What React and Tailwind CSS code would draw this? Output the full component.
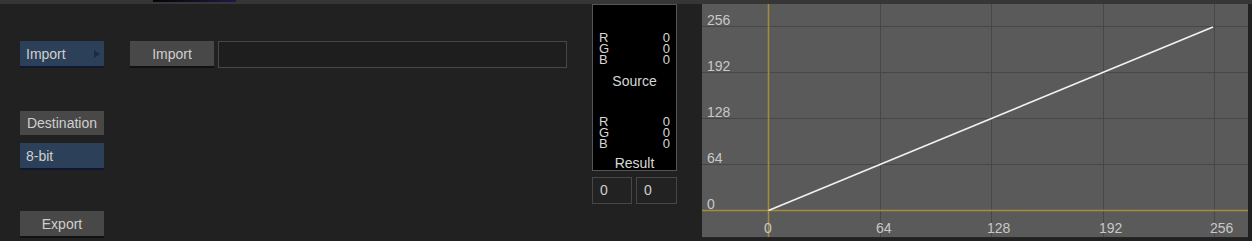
import React from 'react';

const font = { fontFamily: '"Liberation Sans", Arial, sans-serif' };

function Btn({ children, blue, flat, arrow, left, className = '' }) {
  const base = blue
    ? 'bg-[#2c4059] border-b-2 border-[#0f1830] pt-[2px]'
    : flat
    ? 'bg-[#484848]'
    : 'bg-[#484848] border-b-2 border-[#111111] pt-[2px]';
  return (
    <div
      className={`relative w-[84px] flex items-center text-[14px] text-[#cfcfcf] ${left ? 'justify-start pl-[6px]' : 'justify-center'} ${base} ${className}`}
    >
      {children}
      {arrow && (
        <span className="absolute right-[4px] top-[9px] w-0 h-0 border-y-[4px] border-y-transparent border-l-[6px] border-l-[#1a2a48]" />
      )}
    </div>
  );
}

function RGB() {
  return (
    <div className="flex flex-col px-[6px] text-[13px] text-[#d8d8d8]">
      {['R', 'G', 'B'].map((c) => (
        <div key={c} className="flex justify-between h-[11px] leading-[11px]">
          <span>{c}</span>
          <span>0</span>
        </div>
      ))}
    </div>
  );
}

function Graph() {
  const xs = [66, 178, 289, 401, 512];
  const ys = [22, 68, 114, 160, 206];
  const xl = ['0', '64', '128', '192', '256'];
  const yl = ['256', '192', '128', '64', '0'];
  return (
    <svg width="546" height="234" className="block bg-[#5a5a5a]" style={font}>
      {xs.map((x) => (
        <line key={'v' + x} x1={x + 0.5} y1="0" x2={x + 0.5} y2="234" stroke="#474747" strokeWidth="1" />
      ))}
      {ys.map((y) => (
        <line key={'h' + y} x1="0" y1={y + 0.5} x2="546" y2={y + 0.5} stroke="#474747" strokeWidth="1" />
      ))}
      <line x1="66.5" y1="0" x2="66.5" y2="234" stroke="#a48c3c" strokeWidth="1.5" />
      <line x1="0" y1="206.5" x2="546" y2="206.5" stroke="#a48c3c" strokeWidth="1.5" />
      <line x1="66.5" y1="206.5" x2="511" y2="23" stroke="#f2f2f2" strokeWidth="1.6" />
      {yl.map((t, i) => (
        <text key={'yl' + t} x="5" y={ys[i] - 1} fontSize="14" fill="#c8c8c8">
          {t}
        </text>
      ))}
      {xl.map((t, i) => (
        <text key={'xl' + t} x={xs[i] - 4} y="229" fontSize="14" fill="#c8c8c8">
          {t}
        </text>
      ))}
      <line x1="0" y1="233.5" x2="546" y2="233.5" stroke="#262626" strokeWidth="1" />
    </svg>
  );
}

export default function App() {
  return (
    <div className="w-[1252px] h-[241px] bg-[#212121] flex flex-col overflow-hidden" style={font}>
      <div className="h-[4px] bg-[#363636] shrink-0">
        <div className="ml-[153px] w-[83px] h-[2px] bg-gradient-to-r from-[#050505] to-[#1c1a4a]" />
      </div>
      <div className="flex flex-1">
        <div className="w-[592px] flex pl-[20px] shrink-0">
          <div className="flex flex-col">
            <Btn blue arrow left className="mt-[37px] h-[27px]">Import</Btn>
            <Btn flat className="mt-[43px] h-[24px]">Destination</Btn>
            <Btn blue left className="mt-[8px] h-[27px]">8-bit</Btn>
            <Btn className="mt-[41px] h-[27px]">Export</Btn>
          </div>
          <div className="flex ml-[26px] mt-[37px] h-[27px] gap-[4px]">
            <Btn className="h-[27px]">Import</Btn>
            <div className="w-[349px] h-[27px] bg-[#1e1e1e] border border-[#474747]" />
          </div>
        </div>
        <div className="w-[85px] flex flex-col shrink-0">
          <div className="h-[167px] bg-black border border-[#555555] flex flex-col pt-[27px]">
            <RGB />
            <div className="text-center text-[14px] text-[#d8d8d8] leading-[14px] mt-[9px]">Source</div>
            <div className="mt-[28px]">
              <RGB />
            </div>
            <div className="text-center text-[14px] text-[#d8d8d8] leading-[14px] mt-[7px]">Result</div>
          </div>
          <div className="flex gap-[4px] mt-[6px]">
            <div className="w-[40px] h-[27px] border border-[#474747] bg-[#222222] text-[14px] text-[#cfcfcf] flex items-center pl-[7px]">0</div>
            <div className="w-[41px] h-[27px] border border-[#474747] bg-[#222222] text-[14px] text-[#cfcfcf] flex items-center pl-[7px]">0</div>
          </div>
        </div>
        <div className="ml-[25px] shrink-0">
          <Graph />
        </div>
      </div>
    </div>
  );
}
